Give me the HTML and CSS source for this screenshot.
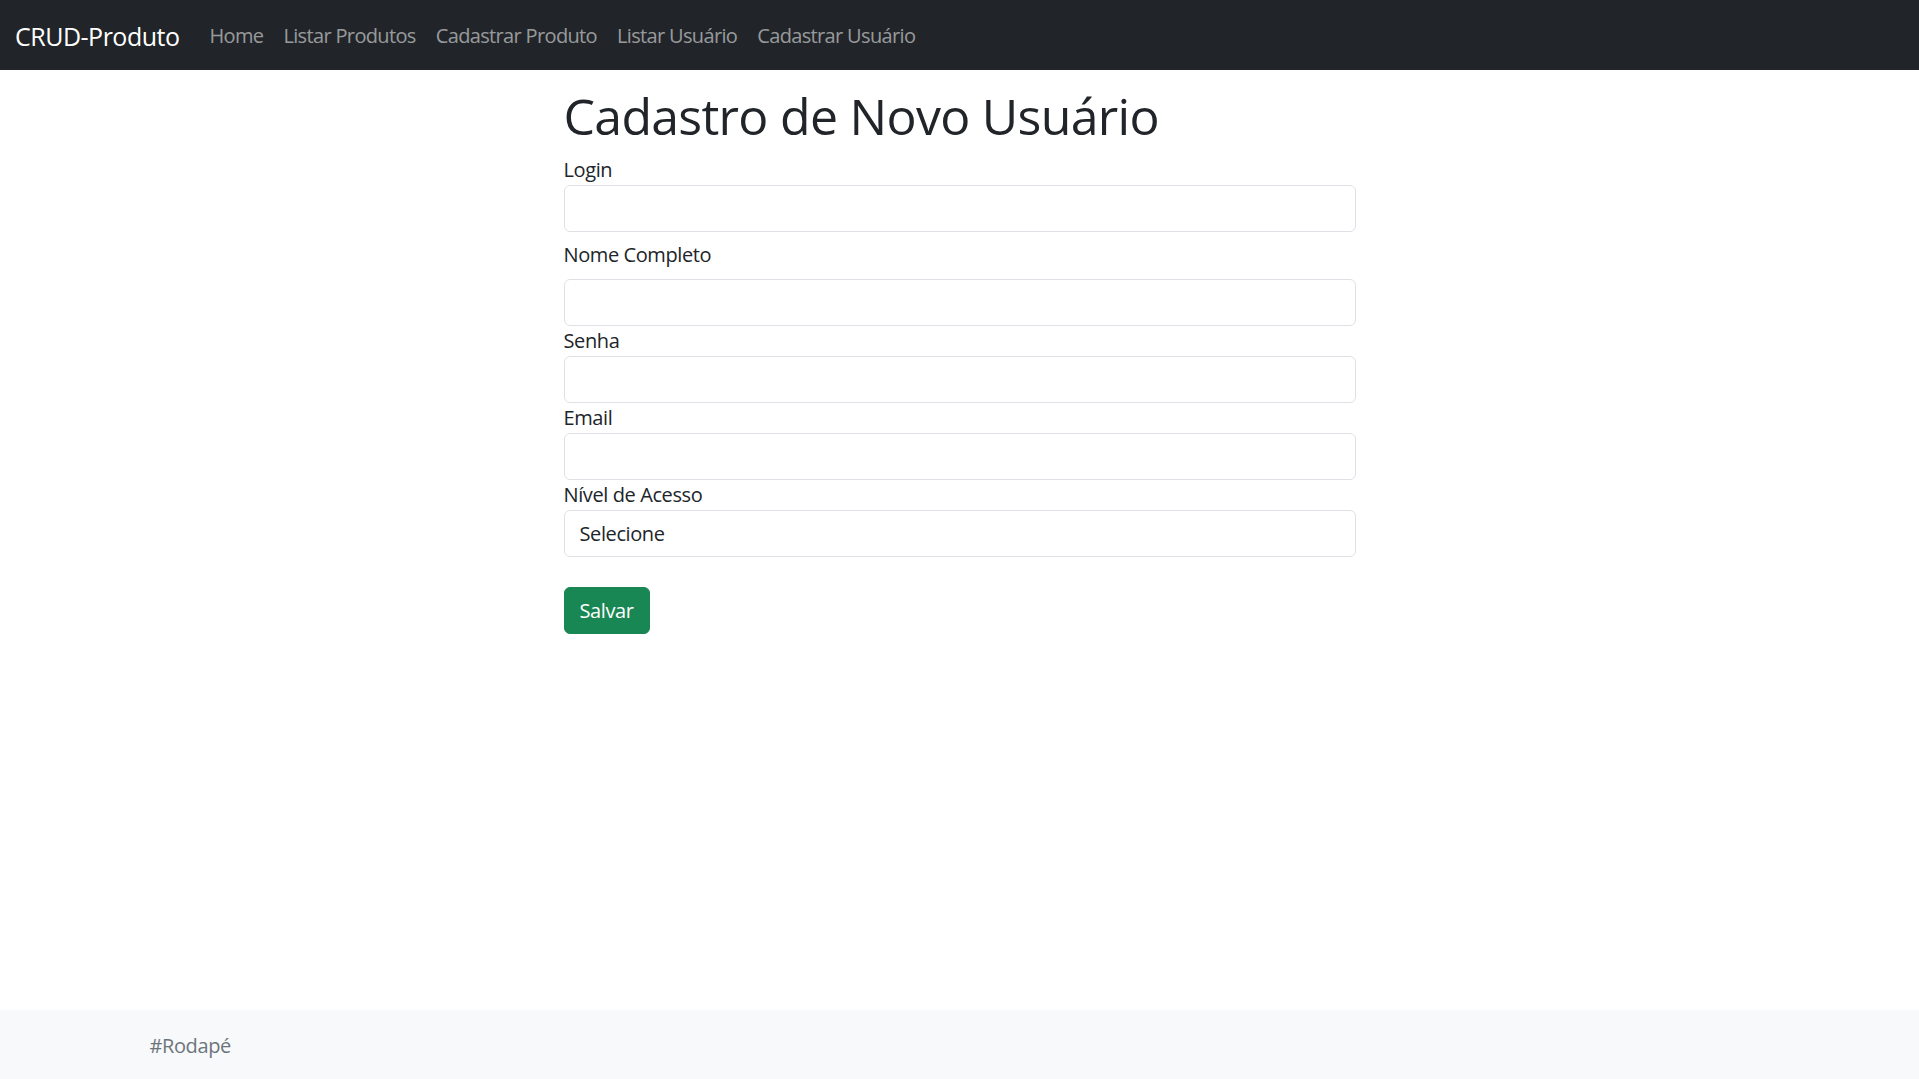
FILE: index.html
```html
<!DOCTYPE html>
<html lang="pt-BR">
<head>
<meta charset="utf-8">
<title>Cadastro de Novo Usuário</title>
<link rel="stylesheet" href="styles.css">
</head>
<body>
<div class="page">
  <nav class="navbar">
    <a class="brand" href="#">CRUD-Produto</a>
    <ul class="nav">
      <li><a class="nav-link" href="#">Home</a></li>
      <li><a class="nav-link" href="#">Listar Produtos</a></li>
      <li><a class="nav-link" href="#">Cadastrar Produto</a></li>
      <li><a class="nav-link" href="#">Listar Usuário</a></li>
      <li><a class="nav-link" href="#">Cadastrar Usuário</a></li>
    </ul>
  </nav>
  <main class="container">
    <div class="col">
      <h1 class="title">Cadastro de Novo Usuário</h1>
      <form class="form">
        <label class="label">Login</label>
        <input class="control gap-after-first" type="text">
        <label class="label label-spaced">Nome Completo</label>
        <input class="control" type="text">
        <label class="label">Senha</label>
        <input class="control" type="password">
        <label class="label">Email</label>
        <input class="control" type="email">
        <label class="label">Nível de Acesso</label>
        <select class="control select">
          <option>Selecione</option>
        </select>
        <div class="actions">
          <button class="btn" type="button">Salvar</button>
        </div>
      </form>
    </div>
  </main>
  <footer class="footer">
    <div class="footer-inner">#Rodapé</div>
  </footer>
</div>
</body>
</html>
```

FILE: styles.css
```css
* { box-sizing: border-box; }
html, body { margin: 0; padding: 0; }
body {
  font-family: "Open Sans", "Noto Sans", sans-serif;
  font-size: 20px;
  line-height: 30px;
  letter-spacing: -0.4px;
  color: #212529;
  background: #fff;
}
.page {
  min-height: 100vh;
  display: flex;
  flex-direction: column;
}
.navbar {
  height: 70px;
  background: #212529;
  display: flex;
  align-items: center;
  padding: 2px 15px 0;
}
.brand {
  color: #fff;
  text-decoration: none;
  font-size: 25px;
  line-height: 37px;
  letter-spacing: -0.5px;
  margin-right: 20px;
}
.nav {
  list-style: none;
  margin: 0;
  padding: 0;
  display: flex;
}
.nav-link {
  display: block;
  padding: 0 10px;
  color: rgba(255,255,255,0.55);
  text-decoration: none;
  font-size: 20px;
  letter-spacing: -0.65px;
}
.container {
  width: 1650px;
  max-width: 100%;
  margin: 0 auto;
  padding: 16px 15px 0;
  display: flex;
  justify-content: center;
}
.col {
  width: 792px;
}
.title {
  font-size: 50px;
  font-weight: 500;
  line-height: 60px;
  letter-spacing: -0.7px;
  margin: 0 0 9px;
}
.form {
  display: flex;
  flex-direction: column;
}
.label {
  display: block;
  line-height: 30px;
}
.label-spaced { margin-bottom: 9px; }
.gap-after-first { margin-bottom: 8px; }
.control {
  display: block;
  width: 100%;
  height: 47px;
  padding: 7px 15px;
  font-family: inherit;
  font-size: 20px;
  letter-spacing: -0.4px;
  color: #212529;
  background: #fff;
  border: 1px solid #dee2e6;
  border-radius: 6px;
  outline: none;
}
.select {
  appearance: none;
  -webkit-appearance: none;
}
.actions {
  margin-top: 30px;
}
.btn {
  height: 47px;
  padding: 0 15px;
  font-family: inherit;
  font-size: 20px;
  letter-spacing: -0.4px;
  color: #fff;
  background: #198754;
  border: 1px solid #198754;
  border-radius: 6px;
}
.footer {
  margin-top: auto;
  background: #f8f9fa;
  height: 69px;
}
.footer-inner {
  width: 1650px;
  max-width: 100%;
  margin: 0 auto;
  padding: 21px 15px 0;
  color: #6c757d;
  line-height: 30px;
}
```
